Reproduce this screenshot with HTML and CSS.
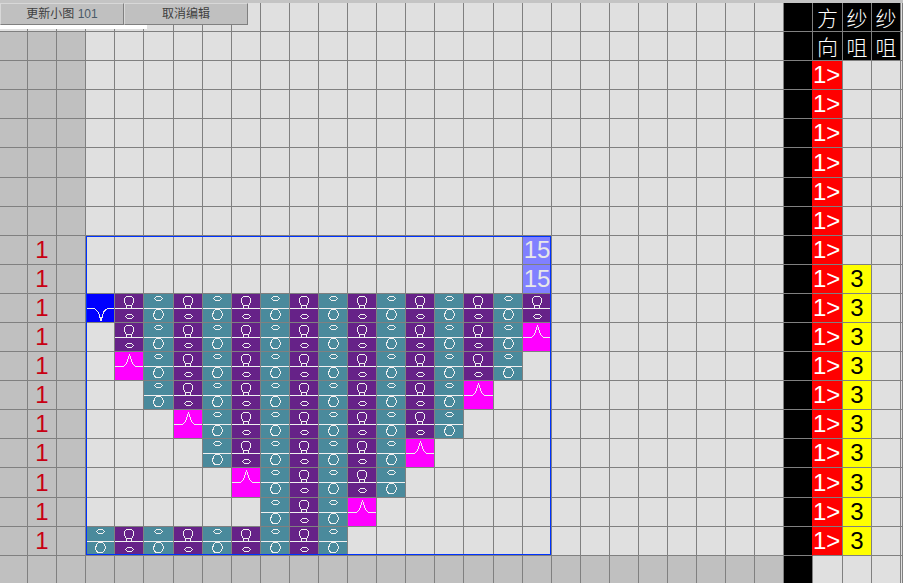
FILE: index.html
```html
<!DOCTYPE html>
<html lang="zh-CN">
<head>
<meta charset="utf-8">
<title>编辑</title>
<link rel="stylesheet" href="styles.css">
</head>
<body>
<svg class="defs" width="0" height="0" aria-hidden="true">
  <symbol id="st-purple" viewBox="0 0 29 28">
    <path d="M0 14.5H29M12 12.5 L11 14M16 12.5 L17 14" />
    <path d="M11.5 2.500H16.500L18.500 4.500V8.500L16.500 11.500H11.500L9.500 8.500V4.500Z" />
    <path d="M12.500 20.500H16.500L18.500 22.500 16.500 24.500H12.500L10.500 22.500Z" />
  </symbol>
  <symbol id="st-teal" viewBox="0 0 29 28">
    <path d="M0 14.5H29" />
    <path d="M12.500 2.500H16.500L18.500 4.500 16.500 6.500H12.500L10.500 4.500Z" />
    <path d="M12.500 15.500H16.500L18.500 17.500 19.500 20.500 18.500 23.500 16.500 25.500H12.500L10.500 24.500 9.500 21.500 10.500 17.500Z" />
  </symbol>
  <symbol id="st-up" viewBox="0 0 29 28">
    <path d="M0 14.5H7Q10 14.5 11.500 11L14.500 3L17.500 11Q19 14.500 22 14.500H29" />
  </symbol>
  <symbol id="st-down" viewBox="0 0 29 28">
    <path d="M0 14.5H7Q11 15 13 20L15 27L17 20Q18.500 15 23 14.500H29" />
  </symbol>
</svg>

<main class="sheet">
  <div id="grid" class="grid"></div>
  <div class="selection"></div>
  <div class="paper-strip"></div>
  <div class="toolbar">
    <button class="tool-btn" type="button">更新小图 <span class="count">101</span></button>
    <button class="tool-btn" type="button">取消编辑</button>
  </div>
</main>

<script src="app.js"></script>
</body>
</html>
```

FILE: styles.css
```css
html, body {
  margin: 0;
  padding: 0;
  height: 100%;
  overflow: hidden;
  background: #e0e0e0;
}

.defs {
  position: absolute;
}

.sheet {
  position: relative;
  width: 903px;
  height: 583px;
  overflow: hidden;
  font-family: "Liberation Sans", "Noto Sans CJK SC", sans-serif;
}

.grid {
  display: grid;
  grid-template-columns:
    28px repeat(4, 29px) 30px repeat(10, 29px) 30px repeat(11, 29px) 30px 29px 29px 2px;
  grid-template-rows:
    3px repeat(5, 29px) 30px repeat(10, 29px) 30px 29px 29px 28px;
}

.top-edge {
  grid-column: 1 / -1;
  background: #c4c4c4;
}

.cell {
  box-sizing: border-box;
  min-width: 0;
  min-height: 0;
  border-right: 1px solid #808080;
  border-bottom: 1px solid #808080;
  background: #e0e0e0;
  display: flex;
  align-items: center;
  justify-content: center;
  font-size: 24px;
  line-height: 1;
  overflow: hidden;
}

.cell svg {
  display: block;
  flex: none;
  align-self: flex-start;
  margin-right: auto;
  width: 29px;
  height: 28px;
  fill: none;
  stroke: #f0f0f0;
  stroke-width: 1;
  shape-rendering: crispEdges;
}

.dark { background: #c0c0c0; }
.black { background: #000; }
.black-red { background: #000; border-right-color: #ff0000; }

.head {
  background: #000;
  color: #fff;
  font-size: 21px;
  font-family: "Noto Sans CJK SC", sans-serif;
  font-weight: 300;
  overflow: visible;
}

.row-num { color: #c80014; }
.dir {
  background: #ff0000;
  color: #fff;
  justify-content: flex-start;
  padding-left: 0;
  white-space: nowrap;
}
.yarn { background: #ffff00; color: #000; }
.count15 { background: #8080ff; color: #e8e8e8; }
.purple { background: #662288; }
.teal { background: #4a8a9c; }
.magenta { background: #ff00ff; }
.blue { background: #0000ff; }

.selection {
  position: absolute;
  left: 86px;
  top: 236px;
  width: 465px;
  height: 319px;
  box-sizing: border-box;
  border: 1px solid #0033ff;
  pointer-events: none;
}

.toolbar {
  position: absolute;
  left: 0;
  top: 3px;
  display: flex;
}

.tool-btn {
  box-sizing: border-box;
  width: 124px;
  height: 22px;
  padding: 0;
  background: #c0c0c0;
  border: 1px solid #808080;
  border-top-color: #d8d8d8;
  border-left-color: #d8d8d8;
  color: #404040;
  font: 12px/1 "Liberation Sans", "Noto Sans CJK SC", sans-serif;
}

.count { color: #4a5a68; }

.paper-strip {
  position: absolute;
  left: 0;
  top: 25px;
  width: 147px;
  height: 4px;
  background: #fff;
}
```

FILE: app.js
```js
// Knitting chart: each stitch row is [first column, last column, accent column, accent kind]
var COLS = 32, ROWS = 21;
var stitchRows = {
  11: { from: 4, to: 18, accent: 3, kind: 'blue' },
  12: { from: 4, to: 17, accent: 18, kind: 'magenta' },
  13: { from: 5, to: 17, accent: 4, kind: 'magenta' },
  14: { from: 5, to: 15, accent: 16, kind: 'magenta' },
  15: { from: 7, to: 15, accent: 6, kind: 'magenta' },
  16: { from: 7, to: 13, accent: 14, kind: 'magenta' },
  17: { from: 9, to: 13, accent: 8, kind: 'magenta' },
  18: { from: 9, to: 11, accent: 12, kind: 'magenta' },
  19: { from: 3, to: 11 }
};
var headers = { '1,28': '方', '1,29': '纱', '1,30': '纱', '2,28': '向', '2,29': '咀', '2,30': '咀' };

function stitch(id) {
  var ns = 'http://www.w3.org/2000/svg';
  var svg = document.createElementNS(ns, 'svg');
  var use = document.createElementNS(ns, 'use');
  svg.setAttribute('viewBox', '0 0 29 28');
  use.setAttribute('href', '#' + id);
  use.setAttribute('width', '29');
  use.setAttribute('height', '28');
  svg.appendChild(use);
  return svg;
}

function fillCell(cell, r, c) {
  var key = r + ',' + c;
  var s = stitchRows[r];

  if (headers[key]) { cell.className += ' head'; cell.textContent = headers[key]; return; }
  if (c === 27) { cell.className += (r >= 3 && r <= 19) ? ' black-red' : ' black'; return; }
  if (r <= 2 && c === 31) { return; }
  if (r === 1 && c < 3) { return; }
  if (c < 3 || (r === 20 && c < 27)) {
    cell.className += ' dark';
    if (c === 1 && r >= 9 && r <= 19) { cell.className += ' row-num'; cell.textContent = '1'; }
    return;
  }
  if (c === 28 && r >= 3 && r <= 19) { cell.className += ' dir'; cell.textContent = '1>'; return; }
  if (c === 29 && r >= 10 && r <= 19) { cell.className += ' yarn'; cell.textContent = '3'; return; }
  if (c === 18 && (r === 9 || r === 10)) { cell.className += ' count15'; cell.textContent = '15'; return; }
  if (!s) { return; }
  if (c === s.accent) {
    cell.className += ' ' + s.kind;
    cell.appendChild(stitch(s.kind === 'blue' ? 'st-down' : 'st-up'));
  } else if (c >= s.from && c <= s.to) {
    var even = c % 2 === 0;
    cell.className += even ? ' purple' : ' teal';
    cell.appendChild(stitch(even ? 'st-purple' : 'st-teal'));
  }
}

var grid = document.getElementById('grid');
var edge = document.createElement('div');
edge.className = 'top-edge';
grid.appendChild(edge);
for (var r = 1; r < ROWS; r++) {
  for (var c = 0; c < COLS; c++) {
    var cell = document.createElement('div');
    cell.className = 'cell';
    fillCell(cell, r, c);
    grid.appendChild(cell);
  }
}
```
